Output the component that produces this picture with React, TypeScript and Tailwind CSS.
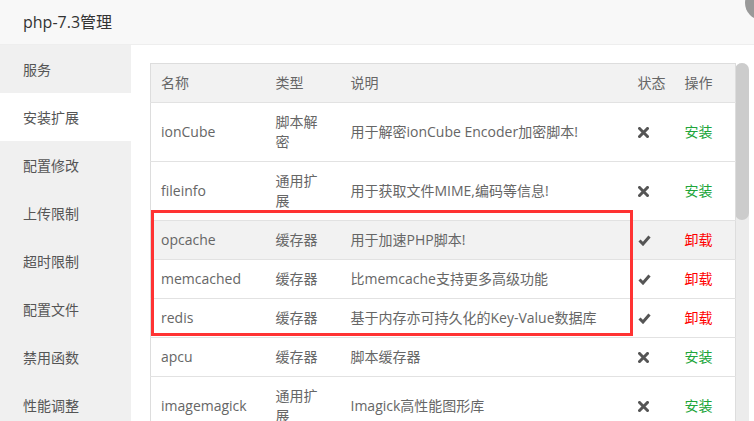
import React from "react";

type Ext = {
  name: string;
  type: string;
  desc: string;
  installed: boolean;
  hover?: boolean;
};

const menu = ["服务", "安装扩展", "配置修改", "上传限制", "超时限制", "配置文件", "禁用函数", "性能调整"];

const exts: Ext[] = [
  { name: "ionCube", type: "脚本解密", desc: "用于解密ionCube Encoder加密脚本!", installed: false },
  { name: "fileinfo", type: "通用扩展", desc: "用于获取文件MIME,编码等信息!", installed: false },
  { name: "opcache", type: "缓存器", desc: "用于加速PHP脚本!", installed: true, hover: true },
  { name: "memcached", type: "缓存器", desc: "比memcache支持更多高级功能", installed: true },
  { name: "redis", type: "缓存器", desc: "基于内存亦可持久化的Key-Value数据库", installed: true },
  { name: "apcu", type: "缓存器", desc: "脚本缓存器", installed: false },
  { name: "imagemagick", type: "通用扩展", desc: "Imagick高性能图形库", installed: false },
];

const Cross = () => (
  <svg width="11" height="11" viewBox="0 0 11 11" className="block">
    <path d="M1.5 1.5 L9.5 9.5 M9.5 1.5 L1.5 9.5" stroke="#555" strokeWidth="3" strokeLinecap="square" fill="none" />
  </svg>
);

const Check = () => (
  <svg width="13" height="11" viewBox="0 0 13 11" className="block">
    <path d="M1.5 5.5 L5 9 L11.5 1.5" stroke="#555" strokeWidth="3" fill="none" />
  </svg>
);

export default function App() {
  return (
    <div
      className="relative w-[754px] h-[421px] overflow-hidden bg-white text-[14px] text-[#666]"
      style={{ fontFamily: '"Open Sans", "Noto Sans CJK SC", sans-serif' }}
    >
      <div className="h-[45px] bg-[#f8f8f8] border-b border-[#eee] flex items-center px-[23px] text-[16px] text-[#333]">
        php-7.3管理
      </div>
      <div className="absolute left-[745px] top-[-14px] w-[34px] h-[34px] rounded-full bg-[#999]" />

      <div className="flex h-[376px]">
        <div className="w-[131px] bg-[#f0f0f0] shrink-0">
          {menu.map((m, i) => (
            <div
              key={m}
              className={`h-[48px] flex items-center pl-[23px] text-[#555] ${i === 1 ? "bg-white" : ""}`}
            >
              {m}
            </div>
          ))}
        </div>

        <div className="flex-1 flex pt-[18px] pl-[19px]">
          <div className="relative w-[585px]">
            <table className="w-[585px] table-fixed border-collapse border border-[#ddd]">
              <colgroup>
                <col className="w-[115px]" />
                <col className="w-[75px]" />
                <col className="w-[287px]" />
                <col className="w-[47px]" />
                <col className="w-[61px]" />
              </colgroup>
              <thead>
                <tr className="bg-[#f2f2f2] text-left">
                  {["名称", "类型", "说明", "状态", "操作"].map(h => (
                    <th
                      key={h}
                      className="font-normal px-[10px] py-[9px] leading-[20px] whitespace-nowrap border-b border-[#e2e2e2]"
                    >
                      {h}
                    </th>
                  ))}
                </tr>
              </thead>
              <tbody>
                {exts.map(e => (
                  <tr key={e.name} className={`border-b border-[#e2e2e2] ${e.hover ? "bg-[#f2f2f2]" : ""}`}>
                    <td className="px-[10px] py-[9px] leading-[20px]">{e.name}</td>
                    <td className="px-[10px] py-[9px] leading-[20px]">{e.type}</td>
                    <td className="px-[10px] py-[9px] leading-[20px] whitespace-nowrap">{e.desc}</td>
                    <td className="px-[10px] py-[9px] leading-[20px]">
                      {e.installed ? <Check /> : <Cross />}
                    </td>
                    <td
                      className={`px-[10px] py-[9px] leading-[20px] whitespace-nowrap ${
                        e.installed ? "text-[#f00]" : "text-[#20a53a]"
                      }`}
                    >
                      {e.installed ? "卸载" : "安装"}
                    </td>
                  </tr>
                ))}
              </tbody>
            </table>
            <div className="absolute left-[1px] top-[147px] w-[482px] h-[126px] border-[3px] border-[#f33]" />
          </div>
          <div className="w-[14px] bg-[#ececec] rounded-t-[7px]">
            <div className="h-[157px] bg-[#ccc] rounded-[7px]" />
          </div>
        </div>
      </div>
    </div>
  );
}
